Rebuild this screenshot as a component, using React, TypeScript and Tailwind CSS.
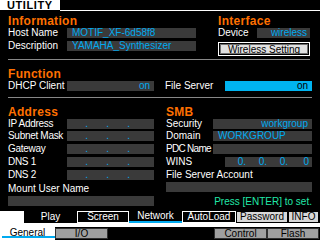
import React from 'react';

const orange = 'text-[#ff7000]';
const field = 'h-[10px] bg-[#3a3a3a] text-[#00aaf0] leading-[10px]';
const rowGaps = ['', 'mt-[2px]', 'mt-[3px]', 'mt-[3px]', 'mt-[3px]'];

function Heading({ children, className = '' }: { children: React.ReactNode; className?: string }) {
  return (
    <div className={`h-[14px] text-[12px] font-bold leading-[14px] tracking-[0.3px] ${orange} ${className}`}>
      {children}
    </div>
  );
}

function IpField({ values, width }: { values: string[]; width: string }) {
  return (
    <div className={`${field} ${width} flex`}>
      {values.map((v, i) => (
        <div key={i} className={`flex-1 text-right ${i === 3 ? 'pr-[3px]' : ''}`}>
          {v}
        </div>
      ))}
    </div>
  );
}

const addressRows = ['IP Address', 'Subnet Mask', 'Gateway', 'DNS 1', 'DNS 2'];

export default function App() {
  return (
    <div className="flex h-[240px] w-[320px] flex-col overflow-hidden whitespace-nowrap bg-black font-['Liberation_Sans',Arial,sans-serif] text-[10px] leading-[10px] text-white">
      {/* title bar */}
      <div className="flex h-[11px]">
        <div className="h-[10px] w-[60px] bg-white pl-[7px] text-[11px] font-bold leading-[11px] tracking-[0.6px] text-black">
          UTILITY
        </div>
        <div className="h-[11px] flex-1 border-b border-white" />
      </div>

      {/* Information / Interface */}
      <div className="flex px-[8px] pt-[3px]">
        <div className="w-[188px]">
          <Heading>Information</Heading>
          <div className="flex h-[10px]">
            <div className="w-[59px]">Host Name</div>
            <div className={`${field} w-[129px] pl-[5px]`}>MOTIF_XF-6d58f8</div>
          </div>
          <div className="mt-[3px] flex h-[10px]">
            <div className="w-[59px]">Description</div>
            <div className={`${field} w-[129px] overflow-hidden pl-[5px]`}>YAMAHA_Synthesizer</div>
          </div>
        </div>
        <div className="ml-[22px] w-[92px]">
          <Heading>Interface</Heading>
          <div className="flex h-[10px]">
            <div className="w-[39px]">Device</div>
            <div className={`${field} w-[53px] pr-[3px] text-right`}>wireless</div>
          </div>
          <div className="mt-[4px] h-[14px] border border-white bg-black p-[1px]">
            <div className="h-full border border-[#707070] bg-[#e0e0e0] text-center leading-[9px] text-black">
              Wireless Setting
            </div>
          </div>
        </div>
      </div>

      <div className="ml-[8px] mt-[3px] h-[1px] w-[302px] bg-[#888888]" />

      {/* Function */}
      <div className="mt-[7px] px-[8px]">
        <Heading>Function</Heading>
        <div className="flex h-[10px]">
          <div className="w-[59px]">DHCP Client</div>
          <div className={`${field} w-[87px] pr-[4px] text-right`}>on</div>
          <div className="ml-[11px] w-[60px]">File Server</div>
          <div className="h-[10px] w-[87px] bg-[#00b4f0] pr-[4px] text-right text-black">on</div>
        </div>
      </div>

      <div className="ml-[8px] mt-[6px] h-[1px] w-[304px] bg-[#888888]" />

      {/* Address / SMB */}
      <div className="mt-[7px] flex px-[8px]">
        <div className="w-[146px]">
          <Heading>Address</Heading>
          {addressRows.map((label, i) => (
            <div key={label} className={`flex h-[10px] ${rowGaps[i]}`}>
              <div className="w-[59px] tracking-[-0.3px]">{label}</div>
              <IpField values={['.', '.', '.', '']} width="w-[87px]" />
            </div>
          ))}
          <div className="mt-[4px] h-[10px]">Mount User Name</div>
          <div className={`${field} mt-[2px] w-[146px]`} />
        </div>
        <div className="ml-[11px] w-[147px]">
          <Heading className="pl-[1px]">SMB</Heading>
          <div className="flex h-[10px]">
            <div className="w-[48px] pl-[1px]">Security</div>
            <div className={`${field} w-[99px] pr-[4px] text-right`}>workgroup</div>
          </div>
          <div className={`flex h-[10px] ${rowGaps[1]}`}>
            <div className="w-[48px] pl-[1px]">Domain</div>
            <div className={`${field} w-[99px] pl-[5px]`}>WORKGROUP</div>
          </div>
          <div className={`flex h-[10px] ${rowGaps[2]}`}>
            <div className="w-[48px] overflow-hidden pl-[1px] tracking-[-0.7px]">PDC Name</div>
            <div className={`${field} w-[99px]`} />
          </div>
          <div className={`flex h-[10px] ${rowGaps[3]}`}>
            <div className="w-[60px] pl-[1px]">WINS</div>
            <IpField values={['0.', '0.', '0.', '0']} width="w-[87px]" />
          </div>
          <div className="mt-[3px] h-[10px] pl-[1px]">File Server Account</div>
          <div className={`${field} ml-[1px] mt-[2px] w-[146px]`} />
          <div className="mt-[5px] h-[10px] text-right text-[#20e8a8]">Press [ENTER] to set.</div>
        </div>
      </div>

      {/* tabs */}
      <div className="mt-auto">
        <div className="flex h-[12px]">
          <div className="w-[24px] bg-white" />
          <div className="flex w-[53px] items-center justify-center">Play</div>
          <div className="flex w-[52px] items-center justify-center border border-white">Screen</div>
          <div className="flex w-[53px] items-center justify-center border-b-2 border-[#00aaf0]">Network</div>
          <div className="flex w-[54px] items-center justify-center border border-white">AutoLoad</div>
          <div className="flex w-[52px] items-center justify-center border border-black bg-[#d8d8d8] text-black">Password</div>
          <div className="flex w-[31px] items-center justify-center border border-black bg-[#d8d8d8] text-black">INFO</div>
        </div>
        <div className="h-[4px] bg-white" />
        <div className="flex h-[13px]">
          <div className="flex w-[55px] flex-col bg-white">
            <div className="h-[9px] pt-[1px] text-center text-black">General</div>
            <div className="ml-[2px] h-[2px] bg-[#00aaf0]" />
          </div>
          <div className="mt-[1px] flex h-[11px] w-[53px] items-center justify-center border border-[#303030] bg-[#a0a0a0] text-black">I/O</div>
          <div className="flex-1" />
          <div className="mt-[1px] flex h-[11px] w-[53px] items-center justify-center border border-[#303030] bg-[#a0a0a0] text-black">Control</div>
          <div className="mt-[1px] flex h-[11px] w-[52px] items-center justify-center border border-[#303030] bg-[#a0a0a0] text-black">Flash</div>
          <div className="w-[1px]" />
        </div>
      </div>
    </div>
  );
}
